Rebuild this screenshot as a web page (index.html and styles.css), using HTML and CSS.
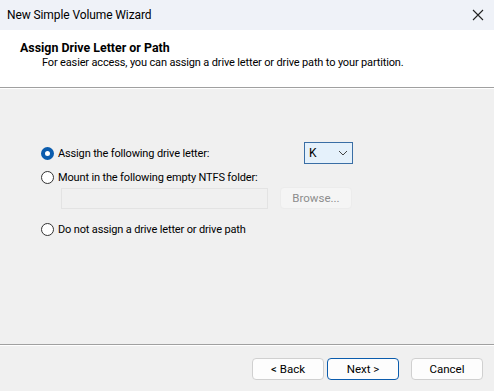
FILE: index.html
```html
<!DOCTYPE html>
<html lang="en">
<head>
  <meta charset="UTF-8">
  <title>New Simple Volume Wizard</title>
  <link rel="stylesheet" href="styles.css">
</head>
<body>
  <div class="window">
    <div class="titlebar">
      <span class="title">New Simple Volume Wizard</span>
      <svg class="close" width="12" height="12" viewBox="0 0 12 12">
        <path d="M1 1 L11 11 M11 1 L1 11" stroke="#222" stroke-width="1.1" fill="none"/>
      </svg>
    </div>

    <!-- Header -->
    <div class="header">
      <h1>Assign Drive Letter or Path</h1>
      <p>For easier access, you can assign a drive letter or drive path to your partition.</p>
    </div>

    <!-- Options -->
    <div class="content">
      <div class="row first">
        <label class="option"><span class="radio checked"></span>Assign the following drive letter:</label>
        <div class="combo"><span>K</span>
          <svg width="10" height="6" viewBox="0 0 10 6"><path d="M1 1 L5 5 L9 1" stroke="#444" stroke-width="1" fill="none"/></svg>
        </div>
      </div>
      <div class="row">
        <label class="option"><span class="radio"></span>Mount in the following empty NTFS folder:</label>
      </div>
      <div class="row folder">
        <div class="textbox"></div>
        <button class="btn disabled">Browse...</button>
      </div>
      <div class="row last">
        <label class="option"><span class="radio"></span>Do not assign a drive letter or drive path</label>
      </div>
    </div>

    <div class="footer">
      <button class="btn">&lt; Back</button>
      <button class="btn default">Next &gt;</button>
      <button class="btn cancel">Cancel</button>
    </div>
  </div>
</body>
</html>
```

FILE: styles.css
```css
body {
  margin: 0;
  font-family: Roboto, "Noto Sans", sans-serif;
  font-size: 11px;
  letter-spacing: -0.15px;
  color: #000;
  background: #f0f0f0;
}

.window {
  width: 494px;
  height: 391px;
  display: flex;
  flex-direction: column;
  background: #f0f0f0;
  overflow: hidden;
}

.titlebar {
  height: 30px;
  flex: none;
  background: #eff2f8;
  display: flex;
  align-items: center;
  justify-content: space-between;
  padding: 0 10px 0 7px;
}

.title {
  font-size: 12px;
  letter-spacing: -0.1px;
}

.header {
  height: 58px;
  flex: none;
  background: #fff;
  border-bottom: 1px solid #a0a0a0;
  box-shadow: 0 1px 0 #fff;
  padding-left: 20px;
  box-sizing: border-box;
}

.header h1 {
  margin: 10px 0 0;
  font-size: 12.4px;
  font-weight: bold;
  line-height: 15px;
  letter-spacing: 0;
}

.header p {
  margin: 0 0 0 22px;
  line-height: 15px;
}

.content {
  flex: 1;
  padding: 53px 0 0 41px;
  border-bottom: 1px solid #a0a0a0;
  box-shadow: 0 1px 0 #fff;
}

.row {
  display: flex;
  align-items: center;
  height: 24px;
}

.row.first {
  justify-content: space-between;
  width: 312px;
}

.row.folder {
  height: 22px;
  padding-left: 20px;
  margin-top: -2px;
  margin-bottom: 8px;
}

.option {
  display: flex;
  align-items: center;
  gap: 4px;
}

.radio {
  width: 11px;
  height: 11px;
  border: 1px solid #333;
  border-radius: 50%;
  background: #fff;
  box-sizing: content-box;
}

.radio.checked {
  width: 5px;
  height: 5px;
  border: 4px solid #0b5cad;
}

.combo {
  width: 39px;
  height: 20px;
  border: 1px solid #3a6ea5;
  background: #e5f1fb;
  display: flex;
  align-items: center;
  justify-content: space-between;
  padding: 0 4px 0 4px;
  box-sizing: content-box;
  margin-top: -1px;
}

.combo span {
  font-size: 12px;
}

.textbox {
  width: 205px;
  height: 19px;
  border: 1px solid #e3e3e3;
  background: #f0f0f0;
  margin-right: 12px;
}

.btn {
  font-family: inherit;
  font-size: 11.5px;
  width: 72px;
  height: 22px;
  border: 1px solid #d0d0d0;
  border-radius: 4px;
  background: #fdfdfd;
  color: #000;
  padding: 0;
}

.btn.disabled {
  color: #8d8d8d;
  border-color: #ececec;
  background: #f5f5f5;
}

.btn.default {
  border: 1px solid #0b5cad;
  margin-left: 3px;
}

.btn.cancel {
  margin-left: 12px;
}

.footer {
  height: 46px;
  flex: none;
  display: flex;
  align-items: center;
  justify-content: flex-end;
  padding-right: 11px;
  padding-top: 2px;
  box-sizing: border-box;
}
```
